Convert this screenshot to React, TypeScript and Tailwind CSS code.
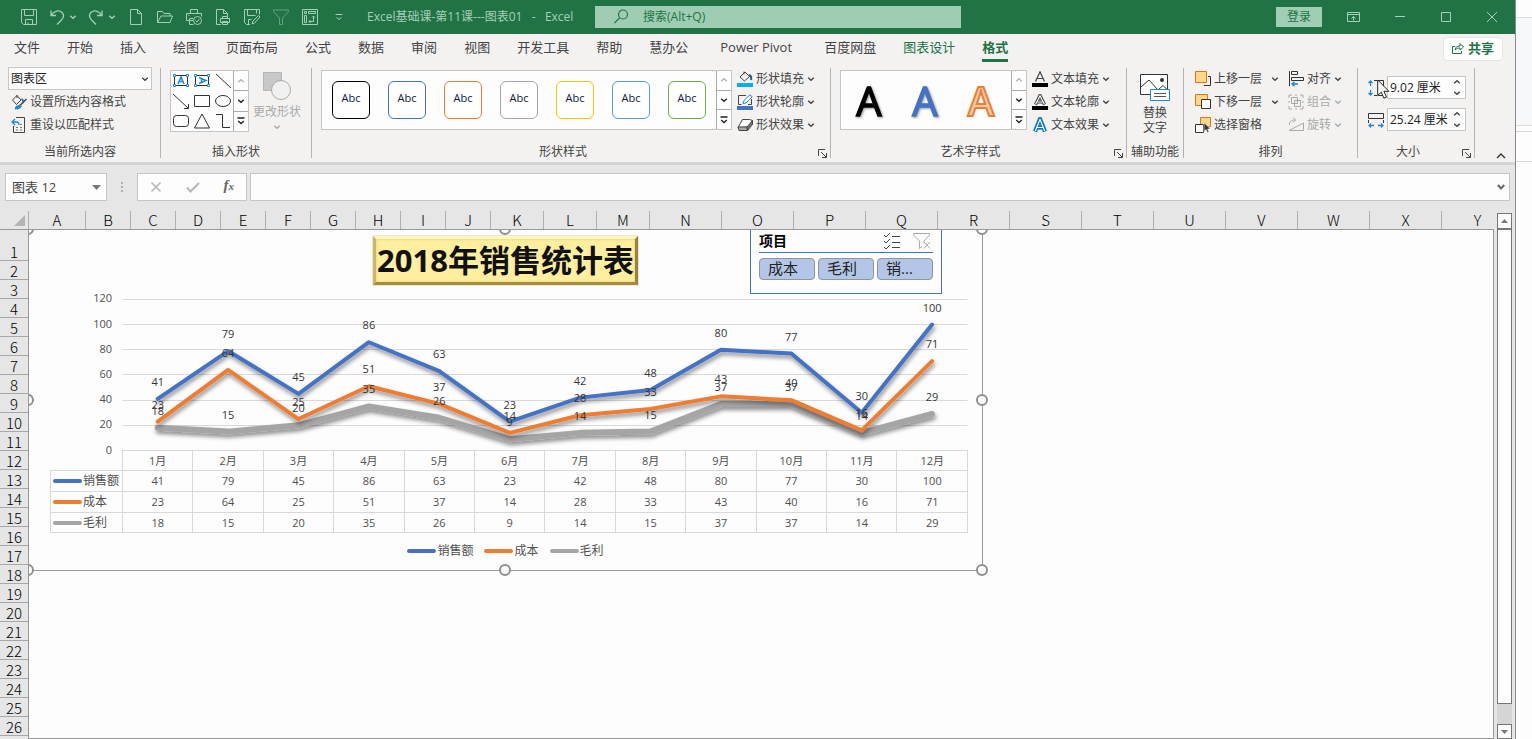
import type { ReactNode } from "react";

const MONTHS = ["1月", "2月", "3月", "4月", "5月", "6月", "7月", "8月", "9月", "10月", "11月", "12月"];

interface Series { name: string; color: string; width: number; values: number[]; }

const SERIES: Series[] = [
  { name: "销售额", color: "#4472c4", width: 4, values: [41, 79, 45, 86, 63, 23, 42, 48, 80, 77, 30, 100] },
  { name: "成本", color: "#ed7d31", width: 4, values: [23, 64, 25, 51, 37, 14, 28, 33, 43, 40, 16, 71] },
  { name: "毛利", color: "#a5a5a5", width: 6, values: [18, 15, 20, 35, 26, 9, 14, 15, 37, 37, 14, 29] },
];

const COLUMNS: { name: string; width: string }[] = [
  { name: "A", width: "w-[57px]" },
  ..."BCDEFGHIJ".split("").map((name) => ({ name, width: "w-[45px]" })),
  ..."KLM".split("").map((name) => ({ name, width: "w-[53px]" })),
  ..."NOPQRSTUVWXY".split("").map((name) => ({ name, width: "w-[72px]" })),
];

const TABS = ["文件", "开始", "插入", "绘图", "页面布局", "公式", "数据", "审阅", "视图", "开发工具", "帮助", "慧办公", "Power Pivot", "百度网盘", "图表设计", "格式"];

const SHAPE_STYLES = ["border-black", "border-[#4472c4]", "border-[#ed7d31]", "border-[#a5a5a5]", "border-[#ffc000]", "border-[#5b9bd5]", "border-[#70ad47]"];

/* ---------- small drawings ---------- */

function Icon({ children, size = 16, className = "" }: { children: ReactNode; size?: number; className?: string }) {
  return (
    <svg width={size} height={size} viewBox={`0 0 ${size} ${size}`} fill="none" stroke="currentColor" className={`shrink-0 ${className}`} aria-hidden="true">
      {children}
    </svg>
  );
}

function Chevron({ className = "", up = false }: { className?: string; up?: boolean }) {
  return (
    <svg width="8" height="6" viewBox="0 0 8 6" fill="none" stroke="currentColor" strokeWidth="1.4" className={`shrink-0 ${className}`} aria-hidden="true">
      <path d={up ? "M1.2 4.3 4 1.7 6.8 4.3" : "M1.2 1.7 4 4.3 6.8 1.7"} />
    </svg>
  );
}

function BigA({ fill, stroke, width, weight, className = "" }: { fill: string; stroke: string; width: number; weight: number; className?: string }) {
  return (
    <svg width="40" height="40" viewBox="0 0 40 40" className={`shrink-0 overflow-visible ${className}`} aria-hidden="true">
      <text x="20" y="36" textAnchor="middle" fontSize="40" fontWeight={weight} fontFamily="Open Sans, sans-serif" fill={fill} stroke={stroke} strokeWidth={width}>
        A
      </text>
    </svg>
  );
}

/* ---------- title bar ---------- */

function QuickButton({ label, dim, children }: { label: string; dim?: boolean; children: ReactNode }) {
  return (
    <button type="button" aria-label={label} className={`flex w-[29px] items-center justify-center ${dim ? "opacity-50" : ""}`}>
      <Icon>{children}</Icon>
    </button>
  );
}

function TitleBar() {
  return (
    <header className="flex h-[34px] items-stretch bg-[#217346] pl-[14px] text-xs text-[#a3d0b7]">
      <QuickButton label="保存">
        <path d="M.5.5h15v15h-13l-2-2zM3.5.5v6h9v-6M4.5 15.5v-5h7v5M7 15.5v-2" />
      </QuickButton>
      <button type="button" aria-label="撤消" className="flex w-[39px] items-center gap-1 pl-[6px]">
        <Icon><path d="M2 1.5v5h5M2 6.5C5 2 10 .5 13 3.500s1.500 5.500-1 8L8 15.500" strokeWidth="1.3" /></Icon>
        <Chevron />
      </button>
      <button type="button" aria-label="恢复" className="flex w-[39px] items-center gap-1 pl-[6px]">
        <Icon><path d="M14 1.500v5H9M14 6.500C11 2 6 .5 3 3.500s-1.500 5.500 1 8L8 15.500" strokeWidth="1.3" /></Icon>
        <Chevron />
      </button>
      <QuickButton label="新建"><path d="M2.500.5h7l4 4v11h-11zM9.500.5v4h4" /></QuickButton>
      <QuickButton label="打开"><path d="M.5 13.500v-11h5l1.500 2h6v2.500M.5 13.500 4 7h11.500l-2.500 6.500z" /></QuickButton>
      <QuickButton label="快速打印">
        <path d="M4.500 4.500v-4h7v4M7 11.500H.5v-7h15v3M3.500 15.500v-6h4M3.500 15.500h4M2.500 6.500h1" />
        <circle cx="11.500" cy="11.500" r="4" />
        <path d="m9.500 11.500 1.500 1.500 2.500-3" />
      </QuickButton>
      <QuickButton label="打印预览">
        <path d="M6 15.500H1.500V.5h7l4 4v3M8.500.5v4h4M7.500 9.500v-2h5v2M5.500 13.500v-4h9v4zM7.500 12.500h5v3h-5z" />
      </QuickButton>
      <QuickButton label="另存为">
        <path d="M6 15.500H2.500l-2-2V.5h15v5M3.500.5v6h8M12.500.5v4M4.500 15.500v-5h3M8 15l1-3 5.500-5.500 1.500 1.500-5.500 6z" />
      </QuickButton>
      <QuickButton label="筛选" dim><path d="M.5 1h15v1.500L9.500 9v6.500h-3V9l-6-6.500z" /></QuickButton>
      <QuickButton label="数据透视表">
        <path d="M.5.5h15v15H.5zM2.500 2.500h2v2h-2zM6.500 2.500h7v2h-7zM2.500 6.500h2v7h-2zM7 12.500h4.500V7M8.500 11l-1.500 1.500L8.500 14M10 8.500 11.500 7 13 8.500" />
      </QuickButton>
      <button type="button" aria-label="自定义快速访问工具栏" className="flex w-[29px] items-center justify-center">
        <Icon size={10}><path d="M1.500 2.500h7M2.500 5.500 5 7.500l2.500-2" /></Icon>
      </button>
      <h1 className="ml-[14px] w-[228px] self-center whitespace-pre leading-4">Excel基础课-第11课---图表01   -   Excel</h1>
      <label className="my-[6px] flex w-[366px] items-center gap-[14px] bg-[#9fcdb3] pl-[18px] text-[#217346]">
        <Icon><circle cx="10" cy="5.500" r="4.500" strokeWidth="1.2" /><path d="M6.800 8.700 1.500 14" strokeWidth="1.200" /></Icon>
        <input aria-label="搜索" placeholder="搜索(Alt+Q)" className="min-w-0 flex-1 bg-transparent text-xs leading-4 outline-none placeholder:text-[#217346]" />
      </label>
      <div className="ml-auto flex items-stretch">
        <button type="button" className="my-[7px] mr-[9px] w-[46px] bg-[#a0ceb4] text-xs leading-4 text-[#217346]">登录</button>
        <button type="button" aria-label="功能区显示选项" className="flex w-[46px] items-center justify-center">
          <Icon><path d="M1.500 3.500h12v9h-12zM1.500 5.500h12M7.500 11.500v-4M5.500 9.500l2-2 2 2" /></Icon>
        </button>
        <button type="button" aria-label="最小化" className="flex w-[46px] items-center justify-center">
          <Icon size={10}><path d="M0 4.500h10" /></Icon>
        </button>
        <button type="button" aria-label="最大化" className="flex w-[46px] items-center justify-center">
          <Icon size={10}><path d="M.5.5h9v9h-9z" /></Icon>
        </button>
        <button type="button" aria-label="关闭" className="flex w-[46px] items-center justify-center">
          <Icon size={10}><path d="m0 0 10 10M10 0 0 10" /></Icon>
        </button>
      </div>
    </header>
  );
}

function TabStrip() {
  return (
    <nav className="flex h-[30px] items-start gap-[27px] bg-[#f3f2f1] pl-[14px] text-[13px] leading-5 text-[#444]">
      {TABS.map((tab) => {
        const active = tab === "格式";
        return (
          <button
            key={tab}
            type="button"
            className={[
              "mt-[3px] h-[25px] shrink-0 whitespace-nowrap border-b-3 pb-[2px]",
              active ? "border-[#217346] font-bold text-[#217346]" : "border-transparent",
              tab === "图表设计" ? "text-[#217346]" : "",
              tab === "Power Pivot" ? "w-[82px]" : "",
            ].join(" ")}
          >
            {tab}
          </button>
        );
      })}
      <button type="button" className="ml-auto mr-[12px] mt-[3px] flex h-6 w-[60px] items-center justify-center gap-1 rounded-sm border border-[#e6e5e4] bg-[#fdfdfd] pb-[2px] font-bold text-[#217346]">
        <Icon size={12}><path d="M3 4.500H.5v7h9V9M3 8c.5-3 2-4 5-4V1.500L11.500 5 8 8V6C6 6 4.500 6.500 3 8z" /></Icon>
        共享
      </button>
    </nav>
  );
}

/* ---------- ribbon ---------- */

function Group({ label, className, launcher, children }: { label: string; className: string; launcher?: boolean; children: ReactNode }) {
  return (
    <section className={`my-1 flex shrink-0 flex-col border-r border-[#b5b4b3] ${className}`}>
      <div className="flex flex-1 items-start">{children}</div>
      <div className={`relative h-3 text-center text-xs leading-3 ${launcher ? "pr-4" : ""}`}>
        {label}
        {launcher && (
          <button type="button" aria-label={`${label}选项`} className="absolute bottom-0 right-[3px]">
            <Icon size={9}><path d="M.5 7V.5H7M3 3l5 5M8.500 4v4.500H4" /></Icon>
          </button>
        )}
      </div>
    </section>
  );
}

function Command({ label, icon, menu, wide, disabled }: { label: string; icon: ReactNode; menu?: boolean; wide?: boolean; disabled?: boolean }) {
  return (
    <button type="button" disabled={disabled} className={`flex h-[23px] items-center gap-[3px] whitespace-nowrap ${disabled ? "text-[#aaa]" : ""}`}>
      {icon}
      {label}
      {menu && <Chevron className={wide ? "ml-[6px]" : ""} />}
    </button>
  );
}

function GalleryScroll() {
  return (
    <div className="flex w-[15px] flex-col divide-y divide-[#ababab] border-l border-[#ababab] text-[#222]">
      <button type="button" aria-label="上一行" className="flex flex-1 items-center justify-center text-[#b5b5b5]"><Chevron up /></button>
      <button type="button" aria-label="下一行" className="flex flex-1 items-center justify-center"><Chevron /></button>
      <button type="button" aria-label="其他" className="flex flex-1 items-center justify-center">
        <Icon size={8}><path d="M.5 1h7M1.200 4 4 6.600 6.800 4" strokeWidth="1.300" /></Icon>
      </button>
    </div>
  );
}

const TEXT_BOX = (
  <>
    <path d="M2.500 3.500h13v10h-13z" stroke="#333" />
    <path d="M1.500 2.500h2v2h-2zM14.500 2.500h2v2h-2zM1.500 12.500h2v2h-2zM14.500 12.500h2v2h-2z" stroke="#1e88d2" fill="#fff" />
  </>
);

const SHAPES: { name: string; art: ReactNode }[] = [
  { name: "文本框", art: <>{TEXT_BOX}<path d="m6 12 3-7 3 7M7 9.500h4" stroke="#1e88d2" strokeWidth="1.500" /></> },
  { name: "竖排文本框", art: <>{TEXT_BOX}<path d="m6 5.500 7 3-7 3M8.500 6.500v4" stroke="#1e88d2" strokeWidth="1.500" /></> },
  { name: "直线", art: <path d="m2 2 15 14" /> },
  { name: "箭头", art: <path d="m1 2 15 14M16.500 12v4.500H12" /> },
  { name: "矩形", art: <path d="M1.500 3.500h15v11h-15z" /> },
  { name: "椭圆", art: <ellipse cx="9" cy="9" rx="7.500" ry="5.500" /> },
  { name: "圆角矩形", art: <rect x="1.500" y="3.500" width="15" height="11" rx="3" /> },
  { name: "三角形", art: <path d="m9 2 7.500 14h-15z" /> },
  { name: "肘形连接符", art: <path d="M2 2.500h6.500v13H16" /> },
];

function Spinner({ id, label, value, icon }: { id: string; label: string; value: string; icon: ReactNode }) {
  return (
    <div className="flex items-center gap-[3px]">
      <label htmlFor={id} aria-label={label}>{icon}</label>
      <div className="flex h-[23px] w-[79px] items-center border border-[#c6c6c6] bg-[#fdfdfd]">
        <input id={id} defaultValue={value} className="w-[65px] min-w-0 bg-transparent pl-[2px] text-xs leading-4 text-[#222] outline-none" />
        <div className="flex flex-col gap-[5px]">
          <button type="button" aria-label={`增加${label}`}><Chevron up /></button>
          <button type="button" aria-label={`减少${label}`}><Chevron /></button>
        </div>
      </div>
    </div>
  );
}

function Ribbon() {
  return (
    <div className="relative flex h-[98px] bg-[#f3f2f1] text-xs text-[#444]">
      <Group label="当前所选内容" className="w-[161px]">
        <div className="flex flex-1 flex-col items-stretch pl-2 pr-2">
          <div className="relative -mt-px">
            <select aria-label="图表元素" defaultValue="图表区" className="h-[23px] w-full appearance-none border border-[#c6c6c6] bg-[#fdfdfd] pl-[2px] text-[#222]">
              <option>图表区</option>
            </select>
            <Chevron className="absolute right-[3px] top-[9px]" />
          </div>
          <div className="flex flex-col pl-[3px]">
            <Command
              label="设置所选内容格式"
              icon={<Icon><path d="M1.500 6 6 1.500 10 6l-4.500 4.500zM6 4V1" stroke="#444" /><path d="M15.500 5 9 11.500l-3 3.500" stroke="#444" strokeWidth="1.500" /><path d="m9 11-4 1.500L4 15l4-.5 2.500-2z" fill="#1e88d2" stroke="#1e88d2" /><path d="M10.500 5c1.500.5 2 2 1.500 4" stroke="#1e5fa0" strokeWidth="1.500" /></Icon>}
            />
            <Command
              label="重设以匹配样式"
              icon={<Icon><path d="M5 .5h8.500v15h-11V9" stroke="#444" /><path d="M4 2 1 5l3 3M1 5h4c2 0 3 1 3 3" stroke="#1e88d2" strokeWidth="1.300" /><path d="M5 10.500h2M9 10.500h2M5 13h2M9 13h2M9 7.500h2" stroke="#777" /></Icon>}
            />
          </div>
        </div>
      </Group>

      <Group label="插入形状" className="w-[151px]">
        <div className="mt-[2px] ml-[9px] flex h-[62px] border border-[#c8c6c4] bg-[#fdfdfd]">
          <div className="grid w-[62px] grid-cols-3 grid-rows-3 place-items-center text-[#333]">
            {SHAPES.map((s) => (
              <button key={s.name} type="button" aria-label={s.name}><Icon size={18}>{s.art}</Icon></button>
            ))}
          </div>
          <GalleryScroll />
        </div>
        <button type="button" disabled className="mt-1 ml-1 flex flex-col items-center text-[#aaa]">
          <svg width="30" height="30" viewBox="0 0 30 30" aria-hidden="true">
            <path d="M1.500.5h18v18h-18z" fill="#c8c8c8" stroke="#b5b5b5" />
            <circle cx="19" cy="18" r="9.500" fill="#f0f0f0" stroke="#a8a8a8" />
          </svg>
          <span className="my-[2px] leading-4">更改形状</span>
          <Chevron className="mt-[2px]" />
        </button>
      </Group>

      <Group label="形状样式" className="w-[519px]" launcher>
        <div className="mt-[2px] ml-[9px] flex h-[60px] border border-[#c8c6c4] bg-[#fdfdfd]">
          <div className="flex w-[394px] items-center gap-[18px] pl-[10px]">
            {SHAPE_STYLES.map((border) => (
              <button key={border} type="button" className={`size-[38px] rounded-md border bg-white pb-1 text-[11px] leading-4 text-[#0a1a3a] ${border}`}>
                Abc
              </button>
            ))}
          </div>
          <GalleryScroll />
        </div>
        <div className="-mt-px ml-[5px] flex flex-col">
          <Command menu label="形状填充" icon={<Icon><path d="m3 6 5-5 4.500 4.500-5 4.500zM7 3.500V.5" stroke="#444" /><path d="M12 4c2 .5 2.500 2.500 2 5" stroke="#1e5fa0" strokeWidth="2" /><path d="M0 14h16" stroke="#00b0f0" strokeWidth="4" /></Icon>} />
          <Command menu label="形状轮廓" icon={<Icon><path d="M9 1.500H1.500v9h3M14.500 5v5.500H11" stroke="#444" /><path d="m6 9.500 1-3L13 .8l2.200 2L9 9z" stroke="#1e88d2" fill="#fff" /><path d="M0 14h16" stroke="#4472c4" strokeWidth="4" /></Icon>} />
          <Command menu label="形状效果" icon={<Icon><path d="M5.500 2.500h7l3 1-4 6.500-10.500.5z" fill="#fff" stroke="#444" /><path d="m1 10 1 3.500h8.500L10 10z" fill="#aaa" stroke="#444" /><path d="m10 10 .5 3.500 5-6v-4z" fill="#777" stroke="#444" /></Icon>} />
        </div>
      </Group>

      <Group label="艺术字样式" className="w-[296px]" launcher>
        <div className="mt-[2px] ml-[9px] flex h-[60px] border border-[#c8c6c4] bg-[#fdfdfd]">
          <div className="flex w-[170px] items-center gap-4 pl-2">
            <button type="button" aria-label="黑色艺术字"><BigA fill="#000" stroke="#000" width={1.5} weight={400} className="drop-shadow-[1px_1px_1px_rgba(0,0,0,0.4)]" /></button>
            <button type="button" aria-label="蓝色艺术字"><BigA fill="#4472c4" stroke="#4472c4" width={1.5} weight={400} className="drop-shadow-[1px_1px_1px_rgba(0,0,0,0.4)]" /></button>
            <button type="button" aria-label="橙色艺术字"><BigA fill="#f8cbad" stroke="#ed7d31" width={2} weight={600} /></button>
          </div>
          <GalleryScroll />
        </div>
        <div className="-mt-px ml-[5px] flex flex-col">
          <Command menu label="文本填充" icon={<Icon><path d="M3.500 10.500 8 .8l4.500 9.700M5 7.500h6" stroke="#444" strokeWidth="1.200" /><path d="M0 14h16" stroke="#000" strokeWidth="4" /></Icon>} />
          <Command menu label="文本轮廓" icon={<Icon><path d="M3.500 10.500 8 1.500l4.500 9M5.500 8h5" stroke="#444" strokeWidth="3.200" /><path d="M3.700 10 8 1.800l4.300 8.200M5.500 8h5" stroke="#fff" strokeWidth="1.200" /><path d="M0 14h16" stroke="#000" strokeWidth="4" /></Icon>} />
          <Command menu label="文本效果" icon={<Icon><path d="M3 14.500 8 2l5 12.500M5 10.500h6" stroke="#9cc9ee" strokeWidth="5" /><path d="M3 14.500 8 2l5 12.500M5 10.500h6" stroke="#1272c4" strokeWidth="3.800" /><path d="M3.300 14 8 2.500 12.700 14M5 10.500h6" stroke="#fff" strokeWidth="1.100" /></Icon>} />
        </div>
      </Group>

      <Group label="辅助功能" className="w-[57px]">
        <button type="button" className="mx-auto mt-[6px] flex flex-col items-center">
          <svg width="30" height="28" viewBox="0 0 30 28" fill="none" aria-hidden="true">
            <path d="M.5.500h27v20H.5z" fill="#fff" stroke="#333" />
            <path d="m1 13 8-7 9 10 5-4.500 4 4" stroke="#333" />
            <circle cx="22" cy="6" r="2" fill="#333" />
            <path d="M10.500 15.500h19v11h-19z" fill="#fff" stroke="#1e88d2" />
            <path d="M14 19.500h12M14 22.500h12" stroke="#555" />
          </svg>
          <span className="mt-[3px] w-6 leading-[15px]">替换文字</span>
        </button>
      </Group>

      <Group label="排列" className="w-[174px]">
        <div className="-mt-px ml-[11px] flex gap-[9px]">
          <div className="flex flex-col">
            <Command menu wide label="上移一层" icon={<Icon><path d="M9 14.500h6.500v-9H13" stroke="#333" /><path d="M.5.5h11v11H.5z" fill="#fbd98c" stroke="#e8750c" /></Icon>} />
            <Command menu wide label="下移一层" icon={<Icon><path d="M.5.500h12v11H.5z" fill="#fbd98c" stroke="#e8750c" /><path d="M6.500 5.500h9v9h-9z" fill="#fff" stroke="#333" /></Icon>} />
            <Command label="选择窗格" icon={<Icon><path d="M5.500.5h10v9h-10z" fill="#fbd98c" stroke="#e8750c" /><path d="M.5 7.500h8v8h-8z" fill="#fff" stroke="#333" /><path d="M9 5.500v9l2-2 1.500 3 1.500-.7-1.300-2.800h2.800z" fill="#333" stroke="#fff" strokeWidth=".6" /></Icon>} />
          </div>
          <div className="flex flex-col">
            <Command menu label="对齐" icon={<Icon><path d="M1.500 0v15M3.500.500h6v3h-6zM3.500 6.500h12v3h-12z" stroke="#333" /><path d="M4 13h6M6.500 10.800 4 13l2.500 2.200" stroke="#1e88d2" strokeWidth="1.300" /></Icon>} />
            <Command menu disabled label="组合" icon={<Icon><path d="M3.500 3.500h6v6h-6zM6.500 6.500h6v6h-6z" /><path d="M1 4V1h3M12 1h3v3M1 12v3h3M12 15h3v-3M7 1h2M7 15h2M1 7v2M15 7v2" /></Icon>} />
            <Command menu disabled label="旋转" icon={<Icon><path d="M1 13.500h14.500V6zM1.500 8C1 5 3 3 7.500 3M5 .5 7.500 3 5 5.500" /></Icon>} />
          </div>
        </div>
      </Group>

      <Group label="大小" className="w-[117px]" launcher>
        <div className="mt-2 ml-[10px] flex flex-col gap-[9px]">
          <Spinner
            id="shape-height"
            label="高度"
            value="9.02 厘米"
            icon={<Icon><path d="M2.500 1v5M2.500 10v5M.5 3l2-2 2 2M.5 13l2 2 2-2" stroke="#1e88d2" strokeWidth="1.300" /><path d="M6 .5h3M6 15.500h3M10.500.5h5v15h-5z" stroke="#333" /></Icon>}
          />
          <Spinner
            id="shape-width"
            label="宽度"
            value="25.24 厘米"
            icon={<Icon><path d="M.5 1.500h15v5H.5zM.5 8v3M15.500 8v3" stroke="#333" /><path d="M1 13.500h5M10 13.500h5M3 11.500l-2 2 2 2M13 11.500l2 2-2 2" stroke="#1e88d2" strokeWidth="1.300" /></Icon>}
          />
        </div>
      </Group>

      <button type="button" aria-label="折叠功能区" className="mb-px ml-auto mr-[9px] self-end text-[#333]">
        <Icon size={10}><path d="m1 7 4-4 4 4" strokeWidth="1.300" /></Icon>
      </button>

      {/* mouse pointer resting on the height field */}
      <svg width="14" height="21" viewBox="0 0 14 21" className="absolute left-[1377px] top-[15px]" aria-hidden="true">
        <path d="M.7 1v15.500l3.600-3.300 2.600 6 2.600-1.100-2.600-5.800h5z" fill="#fff" stroke="#222" />
      </svg>
    </div>
  );
}

function FormulaBar() {
  return (
    <div className="flex h-[49px] items-start border-t-3 border-[#d4d4d4] bg-[#e6e6e6] pt-2 pr-[5px] pl-[5px] text-[#444]">
      <div className="flex h-7 w-[102px] items-center border border-[#c6c6c6] bg-[#fdfdfd] pr-[5px] pl-[6px]">
        <input aria-label="名称框" defaultValue="图表 12" className="min-w-0 flex-1 bg-transparent text-[13px] leading-5 outline-none" />
        <svg width="9" height="5" viewBox="0 0 9 5" aria-hidden="true"><path d="M0 0h9L4.500 5z" fill="#777" /></svg>
      </div>
      <svg width="30" height="28" viewBox="0 0 30 28" aria-hidden="true">
        <path d="M14 9h2v2h-2zM14 13h2v2h-2zM14 17h2v2h-2z" fill="#b0b0b0" />
      </svg>
      <div className="flex h-7 w-[110px] items-center justify-around border border-[#c6c6c6] bg-[#fdfdfd] text-[#b8b8b8]">
        <button type="button" aria-label="取消"><Icon size={12}><path d="m1.500 1.500 9 9M10.500 1.500l-9 9" strokeWidth="1.700" /></Icon></button>
        <button type="button" aria-label="输入"><Icon size={14}><path d="m1 7.500 3.500 4L13 3" strokeWidth="2.200" /></Icon></button>
        <button type="button" className="pb-1 font-['Liberation_Serif'] text-[15px] leading-5 font-bold text-[#666] italic" aria-label="插入函数">
          f<span className="text-[11px]">x</span>
        </button>
      </div>
      <div className="ml-[3px] flex h-7 flex-1 items-center border border-[#c6c6c6] bg-[#fdfdfd] pr-1">
        <input aria-label="编辑栏" className="min-w-0 flex-1 bg-transparent px-1 text-[13px] outline-none" />
        <Icon size={8}><path d="M.8 2 4 5.500 7.200 2" strokeWidth="2" stroke="#666" /></Icon>
      </div>
    </div>
  );
}

/* ---------- chart ---------- */

const pointX = (i: number) => 128.7 + i * 70.4;
const pointY = (v: number) => 165.5 - v * 1.259;

function LinePlot() {
  return (
    <svg width="953" height="165" viewBox="0 0 953 165" className="block overflow-visible font-['Open_Sans'] text-[11px]" role="img" aria-label="2018年销售统计表">
      <defs>
        <filter id="line-shadow" x="-5%" y="-20%" width="110%" height="150%">
          <feDropShadow dx="1" dy="3" stdDeviation="2" floodColor="#000" floodOpacity="0.45" />
        </filter>
      </defs>
      {[0, 20, 40, 60, 80, 100, 120].map((tick) => (
        <g key={tick}>
          {tick > 0 && <path d={`M93.500 ${Math.floor(pointY(tick)) + 0.5}H938.500`} stroke="#d9d9d9" />}
          <text x="83" y={pointY(tick) + 3} textAnchor="end" fill="#505050">{tick}</text>
        </g>
      ))}
      {[...SERIES].reverse().map((s) => (
        <polyline
          key={s.name}
          points={s.values.map((v, i) => `${pointX(i)},${pointY(v)}`).join(" ")}
          fill="none"
          stroke={s.color}
          strokeWidth={s.width}
          strokeLinecap="round"
          strokeLinejoin="round"
          filter="url(#line-shadow)"
        />
      ))}
      {SERIES.map((s) =>
        s.values.map((v, i) => (
          <text key={`${s.name}${i}`} x={pointX(i)} y={pointY(v) - 13} textAnchor="middle" fill="#353535">{v}</text>
        ))
      )}
    </svg>
  );
}

function LineKey({ color }: { color: string }) {
  return (
    <svg width="30" height="4" viewBox="0 0 30 4" className="shrink-0" aria-hidden="true">
      <rect width="29" height="4" rx="2" fill={color} />
    </svg>
  );
}

function DataTable() {
  return (
    <table className="ml-[21px] w-[918px] table-fixed border-collapse text-center text-[11px] leading-4 text-[#505050]">
      <thead>
        <tr className="h-5">
          <td className="w-[72px]" />
          {MONTHS.map((m) => (
            <th key={m} scope="col" className="border border-[#d9d9d9] p-0 font-normal">{m}</th>
          ))}
        </tr>
      </thead>
      <tbody>
        {SERIES.map((s) => (
          <tr key={s.name} className="h-[21px] last:h-5">
            <th scope="row" className="border border-[#d9d9d9] p-0 pl-[2px] text-left text-xs leading-4 font-normal">
              <span className="flex items-center"><LineKey color={s.color} />{s.name}</span>
            </th>
            {s.values.map((v, i) => (
              <td key={MONTHS[i]} className="border border-[#d9d9d9] p-0">{v}</td>
            ))}
          </tr>
        ))}
      </tbody>
    </table>
  );
}

function Slicer() {
  return (
    <aside className="absolute top-0 left-[721px] h-16 w-[192px] border border-t-0 border-[#4472c4] bg-[#fdfdfd] px-2 text-black">
      <div className="flex h-[23px] items-center border-b border-[#4472c4] pr-[2px]">
        <h3 className="flex-1 text-[14px] leading-5 font-bold">项目</h3>
        <button type="button" aria-label="多选">
          <Icon size={18} className="text-[#444]"><path d="m1 3 2 2 4-4M1 9l2 2 4-4M1 15l2 2 4-4M9 4.500h8M9 10.500h8M9 15.500h8" /></Icon>
        </button>
        <button type="button" aria-label="清除筛选器" className="ml-3">
          <Icon size={18} className="text-[#aaa]"><path d="M.5 1.500h16V3L11 9v2M6.500 16.500V9l-6-6V1.500M6.500 16.500 9 14.500M11 10l6 6.500M17 10l-6 6.500" /></Icon>
        </button>
      </div>
      <div className="mt-[5px] grid grid-cols-3 gap-[3px]">
        {["成本", "毛利", "销..."].map((item) => (
          <button key={item} type="button" className="h-[22px] rounded-sm border border-[#8e959f] bg-[#b4c6e7] pb-[2px] pl-2 text-left text-[15px] leading-[18px] text-[#222]">
            {item}
          </button>
        ))}
      </div>
    </aside>
  );
}

const HANDLES = [
  "left-[-7px] top-[-7px]", "left-[470px] top-[-7px]", "left-[947px] top-[-7px]",
  "left-[-7px] top-[164px]", "left-[947px] top-[164px]",
  "left-[-7px] top-[334px]", "left-[470px] top-[334px]", "left-[947px] top-[334px]",
];

function Chart() {
  return (
    <section className="relative h-[341px] w-[954px] border-r border-b border-[#999] pt-[6px]">
      <h2 className="mx-auto w-fit border-3 border-t-[#fff6bd] border-r-[#9a8238] border-b-[#a58c42] border-l-[#cdb567] bg-[#ffef9f] px-px text-[31px] leading-[43px] font-bold whitespace-nowrap text-[#111] shadow-[inset_0_0_3px_#e0c976,0_0_1px_#8c7632]">
        2018年销售统计表
      </h2>
      <LinePlot />
      <DataTable />
      <ul className="mt-[10px] flex justify-center gap-[11px] text-xs leading-4 text-[#505050]">
        {SERIES.map((s) => (
          <li key={s.name} className="flex items-center"><LineKey color={s.color} />{s.name}</li>
        ))}
      </ul>
      <Slicer />
      {HANDLES.map((pos) => (
        <span key={pos} className={`absolute size-[12px] rounded-full border-2 border-[#8f8f8f] bg-[#fdfdfd] ${pos}`} />
      ))}
    </section>
  );
}

/* ---------- worksheet ---------- */

function Sheet() {
  return (
    <div className="flex flex-1 bg-[#e6e6e6] font-['Noto_Sans_CJK_SC',sans-serif] text-[15px] text-[#222]">
      <div className="flex min-w-0 flex-1 flex-col">
        <div className="flex h-[19px] overflow-hidden border-b border-[#999] font-light text-black">
          <button type="button" aria-label="全选" className="flex w-[29px] shrink-0 items-center justify-end border-r border-[#b0b0b0] pr-[3px]">
            <svg width="11" height="11" viewBox="0 0 11 11" aria-hidden="true"><path d="M11 0v11H0z" fill="#b4b4b4" /></svg>
          </button>
          {COLUMNS.map((c) => (
            <div key={c.name} className={`h-[18px] shrink-0 border-r border-[#b0b0b0] text-center leading-[18px] ${c.width}`}>{c.name}</div>
          ))}
        </div>
        <div className="flex flex-1">
          <div className="w-[29px] shrink-0 border-r border-[#999] font-light text-black">
            {Array.from({ length: 26 }, (_, i) => (
              <div key={i} className={`flex items-end justify-center border-b border-[#a8a8a8] leading-[17px] ${i === 0 ? "h-[31px]" : "h-[19px]"}`}>
                {i + 1}
              </div>
            ))}
          </div>
          <main className="min-w-0 flex-1 overflow-hidden border-r border-b border-[#999] bg-[#fdfdfd] font-['Open_Sans','Noto_Sans_CJK_SC',sans-serif]">
            <Chart />
          </main>
        </div>
      </div>
      <div className="mt-[-1px] flex w-[21px] flex-col items-center pt-[3px]">
        <button type="button" aria-label="向上滚动" className="flex h-4 w-[15px] items-center justify-center border border-[#777] bg-[#fdfdfd]">
          <svg width="7" height="4" viewBox="0 0 7 4" aria-hidden="true"><path d="M0 4h7L3.500 0z" fill="#777" /></svg>
        </button>
        <div className="flex w-[15px] flex-1 flex-col bg-[#d6d5d4] pb-5">
          <div className="flex-1 border border-[#777] bg-[#fdfdfd]" />
        </div>
        <button type="button" aria-label="向下滚动" className="flex h-[15px] w-[15px] items-center justify-center border border-[#777] bg-[#fdfdfd]">
          <svg width="7" height="4" viewBox="0 0 7 4" aria-hidden="true"><path d="M0 0h7L3.500 4z" fill="#777" /></svg>
        </button>
      </div>
    </div>
  );
}

export default function App() {
  return (
    <div className="flex min-h-screen bg-[#fdfdfd] font-['Open_Sans','Noto_Sans_CJK_SC',sans-serif]">
      <div className="flex min-w-0 flex-1 flex-col border-r border-[#8a8a8a]">
        <TitleBar />
        <TabStrip />
        <Ribbon />
        <FormulaBar />
        <Sheet />
      </div>
      {/* edge of the window behind */}
      <div className="w-4 shrink-0 pt-[17px]">
        <div className="h-[109px] border-y border-[#dcdcdc] bg-[#f6f8f9]" />
        <div className="mt-[5px] h-[31px] border-y border-[#d8d8d8]" />
      </div>
    </div>
  );
}
